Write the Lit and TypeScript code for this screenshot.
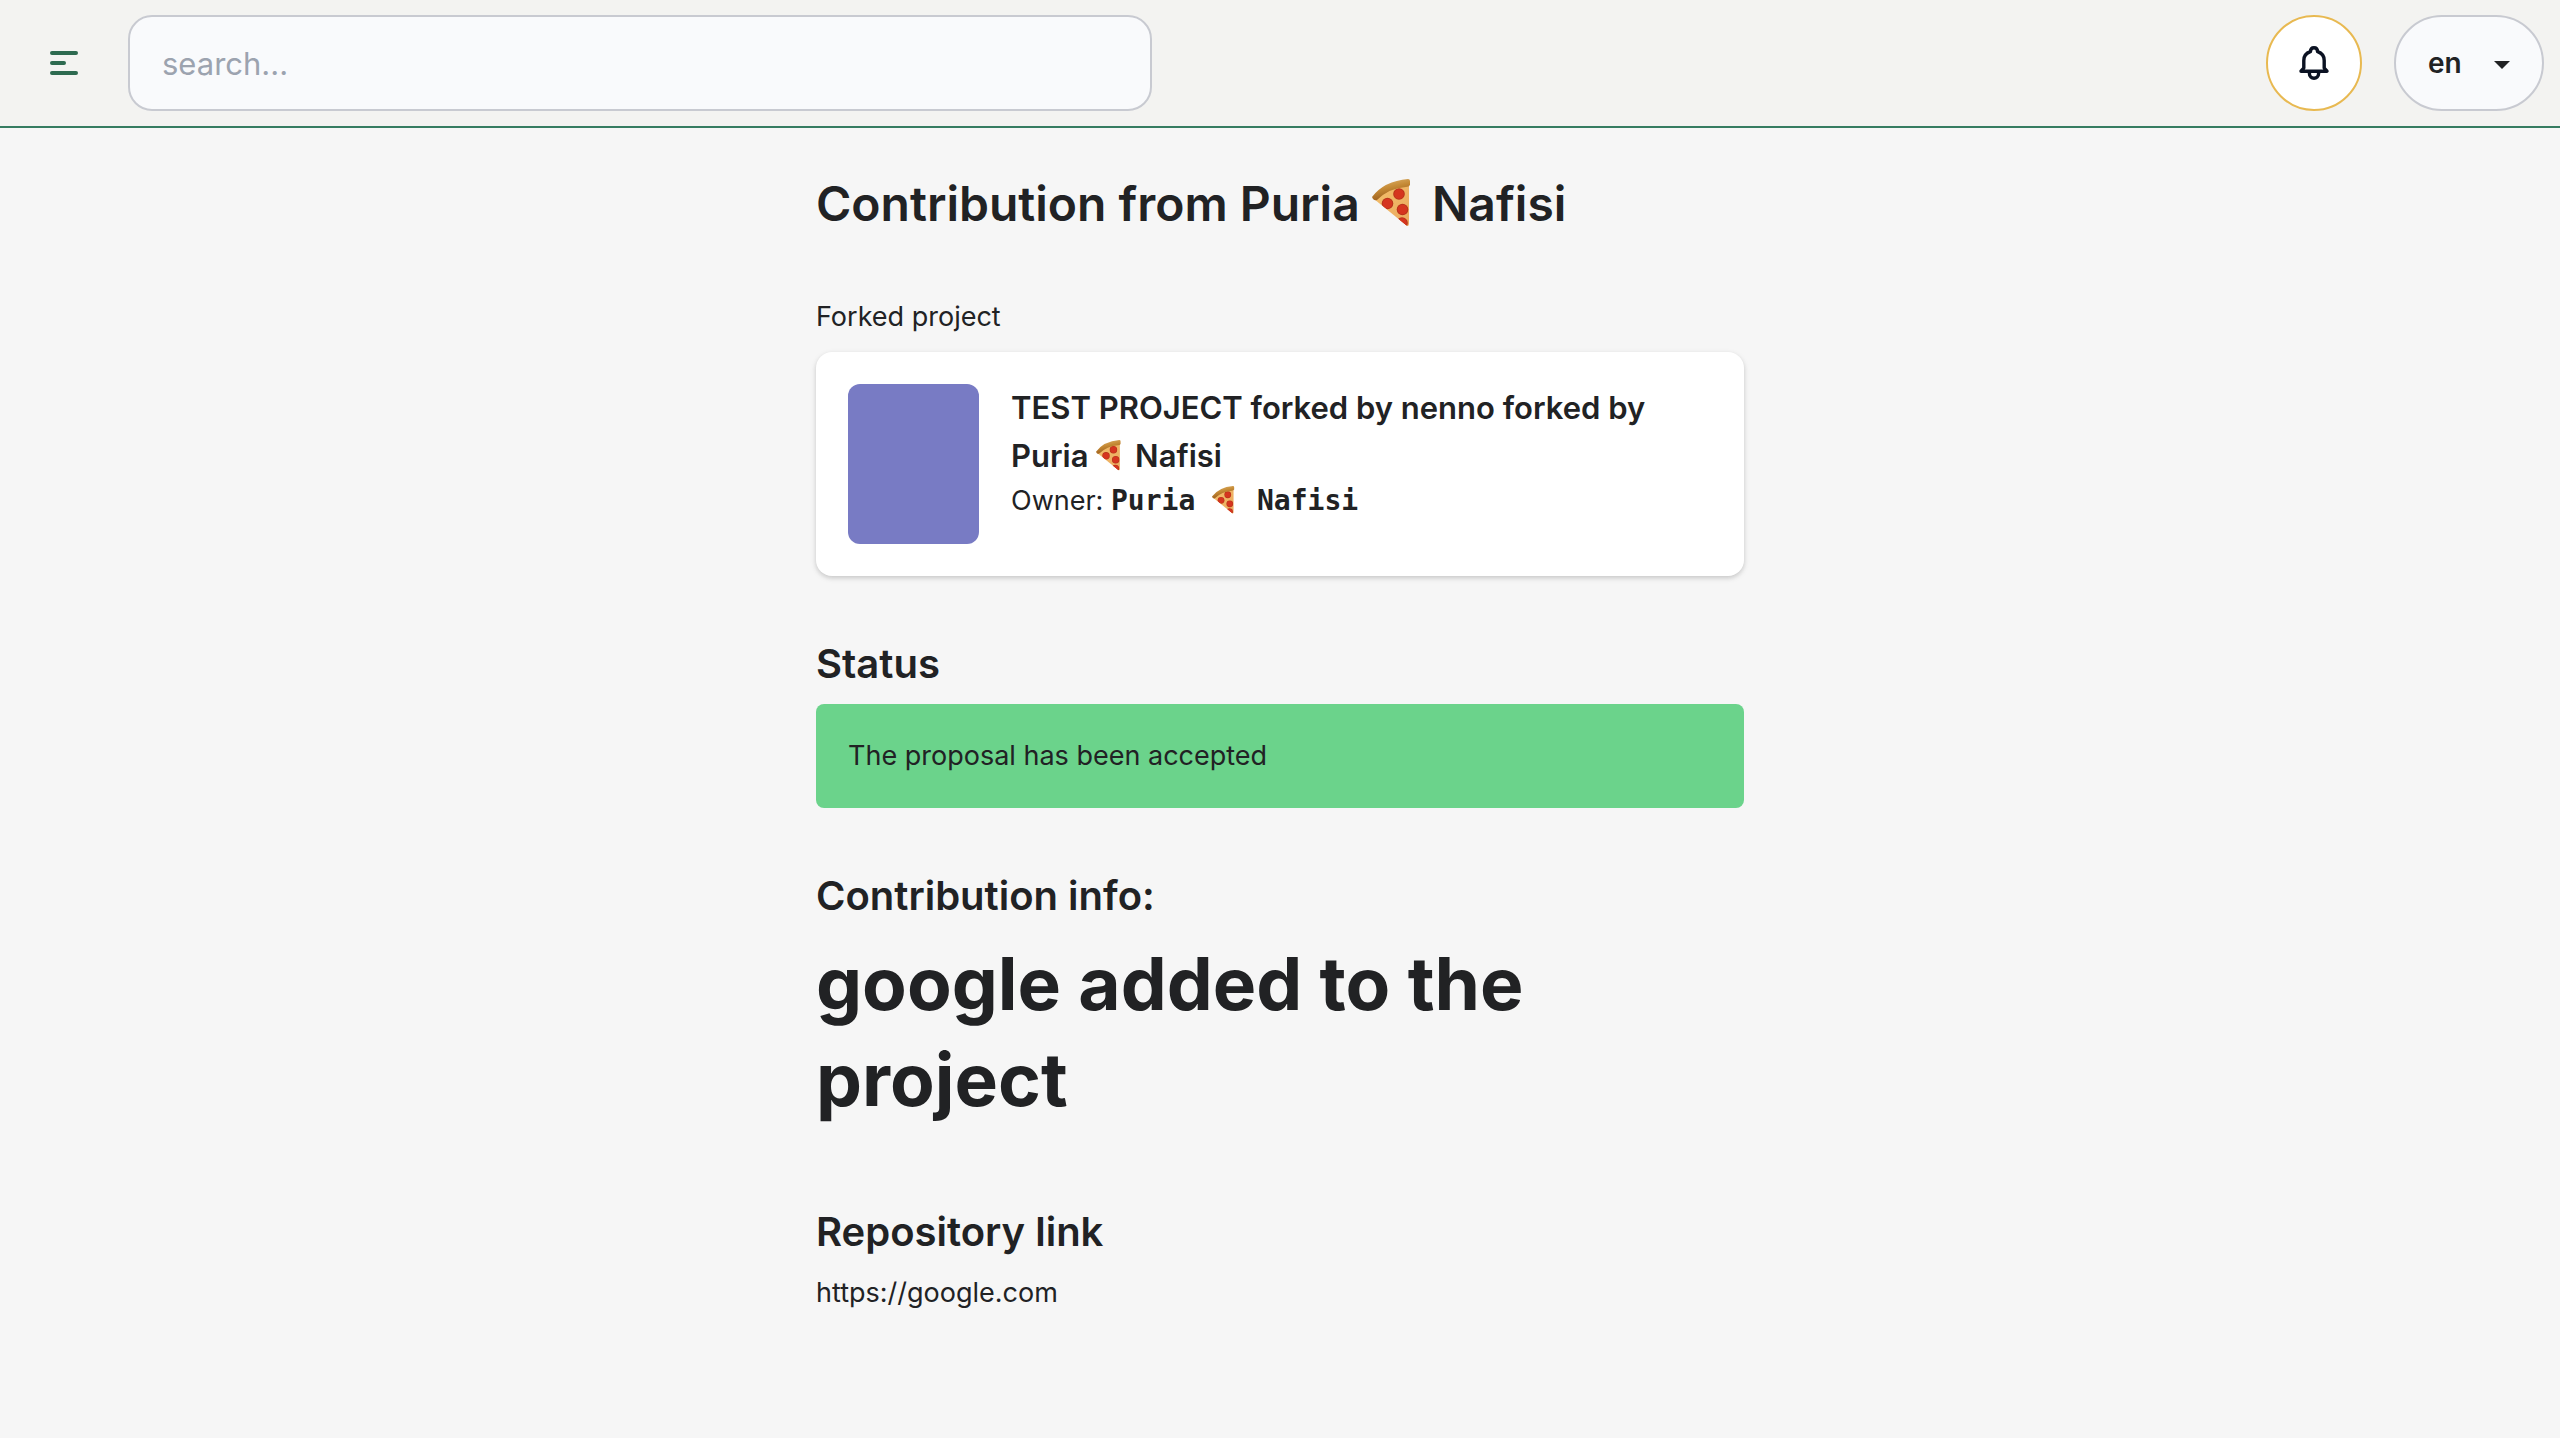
import { LitElement, html, svg, css } from "lit";
import { customElement } from "lit/decorators.js";

@customElement("pizza-slice")
class PizzaSlice extends LitElement {
  static styles = css`
    :host {
      display: inline-block;
    }
    .slice {
      display: block;
      width: 1em;
      height: 1em;
    }
  `;

  render() {
    const pepperoni = [
      [27, 15],
      [15.5, 24.5],
      [30.5, 30.5],
    ];
    return html`
      <svg class="slice" viewBox="0 0 48 48" role="img" aria-label="pizza">
        <defs>
          <linearGradient id="cheese" x1="0" y1="0" x2="1" y2="1">
            <stop offset="0" stop-color="#f2bf6a" />
            <stop offset="1" stop-color="#eba95f" />
          </linearGradient>
          <linearGradient id="crust" x1="0" y1="0" x2="0.4" y2="1">
            <stop offset="0" stop-color="#e3bc78" />
            <stop offset="0.5" stop-color="#c58a35" />
            <stop offset="1" stop-color="#97591a" />
          </linearGradient>
          <clipPath id="wedge">
            <path d="M1 19 Q14 5 37 4 L37 46 Q36 48 34 46 Z" />
          </clipPath>
        </defs>
        <path fill="url(#cheese)" d="M2 20 Q14 8 37 5 L37 45 Q36.5 48 34.5 46.5 Z" />
        <g clip-path="url(#wedge)">
          ${pepperoni.map(
            ([x, y]) => svg`
              <circle cx=${x} cy=${y} r="5.8" fill="#b8331b" />
              <circle cx=${x} cy=${y} r="4.8" fill="#d5351f" />`
          )}
          <circle cx="30" cy="44" r="5.8" fill="#b8331b" />
          <circle cx="30" cy="44" r="4.8" fill="#d5351f" />
        </g>
        <path
          fill="url(#crust)"
          d="M0 18 Q12 2 36 0 Q38 0 38 2 L38 6 Q37 8 34 8 Q17 9 5 21 Q3 22 1 20 Z"
        />
      </svg>
    `;
  }
}

@customElement("app-header")
class AppHeader extends LitElement {
  static styles = css`
    :host {
      display: block;
    }
    .bar {
      display: flex;
      align-items: center;
      gap: 32px;
      padding: 15px 16px 15px 32px;
      background: #f3f3f1;
      border-bottom: 2px solid #367c61;
    }
    .menu {
      display: grid;
      place-items: center;
      width: 64px;
      height: 64px;
      padding: 0;
      border: 0;
      background: none;
      color: #2d6a50;
    }
    .menu-icon {
      width: 64px;
      height: 64px;
    }
    .search {
      box-sizing: border-box;
      width: 40vw;
      height: 96px;
      padding: 0 32px;
      border: 2px solid #c8cad1;
      border-radius: 24px;
      background: #f9fafc;
      color: #212224;
      font: 400 31px/48px Inter, sans-serif;
    }
    .search::placeholder {
      color: #9ca3af;
      opacity: 1;
    }
    .actions {
      display: flex;
      gap: 32px;
      margin-left: auto;
    }
    .bell {
      display: grid;
      place-items: center;
      box-sizing: border-box;
      width: 96px;
      height: 96px;
      padding: 0;
      border: 2px solid #e8b951;
      border-radius: 50%;
      background: #ffffff;
      color: #0b1222;
    }
    .bell-icon {
      width: 40px;
      height: 40px;
    }
    .lang {
      display: grid;
      align-items: center;
    }
    .lang-select,
    .caret {
      grid-area: 1 / 1;
    }
    .lang-select {
      appearance: none;
      box-sizing: border-box;
      width: 150px;
      height: 96px;
      padding: 0 64px 0 32px;
      border: 2px solid #c8cad1;
      border-radius: 48px;
      background: #f9fafc;
      color: #212224;
      font: 600 28px/42px Inter, sans-serif;
    }
    .caret {
      justify-self: end;
      width: 16px;
      height: 8px;
      margin: 4px 34px 0 0;
      pointer-events: none;
    }
  `;

  render() {
    return html`
      <header class="bar">
        <button class="menu" aria-label="Menu">
          <svg class="menu-icon" viewBox="0 0 64 64" fill="none" stroke="currentColor" stroke-width="4" stroke-linecap="round">
            <path d="M20 22H44M20 32H32M20 42H44" />
          </svg>
        </button>
        <input class="search" type="text" placeholder="search..." aria-label="Search" />
        <div class="actions">
          <button class="bell" aria-label="Notifications">
            <svg class="bell-icon" viewBox="0 0 40 40" fill="none" stroke="currentColor" stroke-width="3.4" stroke-linejoin="round">
              <path d="M7 28.2 L9.8 25 V17.5 C9.8 13 12.5 10 16.4 8.7 C16.6 3.4 23.4 3.4 23.6 8.7 C27.5 10 30.2 13 30.2 17.5 V25 L33 28.2 Z" />
              <path d="M15.4 29 V30.5 C15.4 36.8 24.6 36.8 24.6 30.5 V29" />
            </svg>
          </button>
          <div class="lang">
            <select class="lang-select" aria-label="Language">
              <option>en</option>
            </select>
            <svg class="caret" viewBox="0 0 16 8"><path fill="#212224" d="M0 0H16L8 8Z" /></svg>
          </div>
        </div>
      </header>
    `;
  }
}

@customElement("app-root")
class AppRoot extends LitElement {
  static styles = css`
    :host {
      display: block;
      min-height: 100vh;
      background: #f6f6f6;
      color: #212224;
      font: 400 27px/42px Inter, sans-serif;
    }
    .page {
      max-width: 928px;
      margin: 0 auto;
      padding: 40px 32px 64px;
    }
    h1,
    h2,
    h3,
    p {
      margin: 0;
    }
    .title {
      font-size: 48px;
      line-height: 72px;
      font-weight: 600;
    }
    .forked {
      margin-top: 56px;
    }
    .card {
      display: flex;
      gap: 32px;
      margin-top: 14px;
      padding: 32px;
      border-radius: 16px;
      background: #ffffff;
      box-shadow: 0 2px 6px rgba(0, 0, 0, 0.1), 0 2px 4px rgba(0, 0, 0, 0.1);
    }
    .thumb {
      flex: none;
      width: 131px;
      height: 160px;
      border-radius: 12px;
      background: #787bc4;
    }
    .project {
      font-size: 31px;
      line-height: 48px;
      font-weight: 600;
    }
    .owner {
      font: 700 28px/28px "DejaVu Sans Mono", monospace;
    }
    .section {
      margin-top: 58px;
    }
    .heading {
      font-size: 40px;
      line-height: 60px;
      font-weight: 600;
    }
    .status {
      margin-top: 10px;
      padding: 31px 32px;
      border-radius: 8px;
      background: #6bd38b;
    }
    .message {
      margin-top: 10px;
      font-size: 73px;
      line-height: 96px;
      font-weight: 700;
    }
    .repository {
      margin-top: 74px;
    }
    .link {
      display: inline-block;
      margin-top: 10px;
      color: inherit;
      text-decoration: none;
    }
    pizza-slice {
      vertical-align: -4px;
    }
    .title pizza-slice {
      vertical-align: -6px;
    }
  `;

  render() {
    return html`
      <app-header></app-header>
      <main class="page">
        <h1 class="title">Contribution from Puria <pizza-slice></pizza-slice> Nafisi</h1>
        <p class="forked">Forked project</p>
        <article class="card">
          <div class="thumb"></div>
          <div>
            <h3 class="project">TEST PROJECT forked by nenno forked by Puria <pizza-slice></pizza-slice> Nafisi</h3>
            <p>Owner: <span class="owner">Puria <pizza-slice></pizza-slice> Nafisi</span></p>
          </div>
        </article>
        <section class="section">
          <h2 class="heading">Status</h2>
          <p class="status">The proposal has been accepted</p>
        </section>
        <section class="section">
          <h2 class="heading">Contribution info:</h2>
          <h1 class="message">google added to the project</h1>
        </section>
        <section class="repository">
          <h2 class="heading">Repository link</h2>
          <a class="link" href="https://google.com">https://google.com</a>
        </section>
      </main>
    `;
  }
}
